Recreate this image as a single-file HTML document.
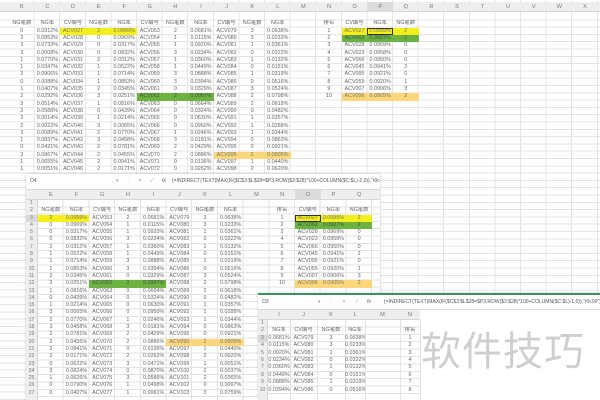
<!DOCTYPE html>
<html><head><meta charset="utf-8"><style>
*{margin:0;padding:0;box-sizing:border-box}
body{width:600px;height:400px;overflow:hidden;background:#fff;position:relative;font-family:"Liberation Sans","Noto Sans CJK SC",sans-serif;color:#666;font-size:5.4px}
.l{position:absolute;overflow:hidden;background:#fff}
table{position:absolute;border-collapse:collapse;table-layout:fixed}
td{padding:0;text-align:center;white-space:nowrap;overflow:hidden;height:7.3px;line-height:7.3px}
.y{background:#f4ee1c;color:#776}.g{background:#6cb240;color:#454}.o{background:#fbd67a;color:#776}
.ch{position:absolute;background:#eeeeee;border-bottom:1px solid #d8d8d8;color:#777;font-size:5.6px}
.ch span{position:absolute;text-align:center;top:0}
.fb{position:absolute;background:#fff;border-bottom:1px solid #d8d8d8;color:#555;font-size:5px;white-space:nowrap}
.rn{position:absolute;background:#eeeeee;border-right:1px solid #d4d4d4;color:#777;font-size:5.2px}
.rn div{height:7.3px;line-height:7.3px;text-align:center}
</style></head><body>

<!-- Layer 1 -->
<div class="l" style="left:0;top:0;width:600px;height:400px;background:
repeating-linear-gradient(90deg,transparent 0 24.6px,#e4e4e4 24.6px 25.6px) 9px 0/100% 100%,
repeating-linear-gradient(180deg,transparent 0 6.3px,#e4e4e4 6.3px 7.3px) 0 13px/100% 100%;">
<div class="ch" style="left:0;top:2px;width:600px;height:10px;line-height:10px">
<span style="left:9px;width:25.6px">B</span><span style="left:34.6px;width:25.6px">C</span><span style="left:60.2px;width:25.6px">D</span><span style="left:85.8px;width:25.6px">E</span><span style="left:111.4px;width:25.6px">F</span><span style="left:137px;width:25.6px">G</span><span style="left:162.6px;width:25.6px">H</span><span style="left:188.2px;width:25.6px">I</span><span style="left:213.8px;width:25.6px">J</span><span style="left:239.4px;width:25.6px">K</span><span style="left:265px;width:25.6px">L</span><span style="left:290.6px;width:25.6px">M</span><span style="left:316.2px;width:25.6px">N</span><span style="left:341.8px;width:25.6px">O</span><span style="left:367.4px;width:25.6px;background:#dcdcdc">P</span><span style="left:393px;width:25.6px">Q</span><span style="left:418.6px;width:25.6px">R</span><span style="left:444.2px;width:25.6px">S</span><span style="left:469.8px;width:25.6px">T</span><span style="left:495.4px;width:25.6px">U</span><span style="left:521px;width:25.6px">V</span><span style="left:546.6px;width:25.6px">W</span><span style="left:572.2px;width:25.6px">X</span>
</div>
<table style="left:9px;top:20.4px;width:409.6px">
<colgroup><col span="16" style="width:25.6px"></colgroup>
<tr><td>NG笔数</td><td>NG率</td><td>CV编号</td><td>NG笔数</td><td>NG率</td><td>CV编号</td><td>NG笔数</td><td>NG率</td><td>CV编号</td><td>NG笔数</td><td>NG率</td><td></td><td>排名</td><td>CV编号</td><td>NG率</td><td>NG笔数</td></tr>
<tr><td>0</td><td>0.0312%</td><td class="y">ACV027</td><td class="y">2</td><td class="y">0.0999%</td><td>ACV053</td><td>2</td><td>0.0681%</td><td>ACV079</td><td>3</td><td>0.0638%</td><td></td><td>1</td><td class="y">ACV027</td><td class="y" style="outline:1px solid #333;outline-offset:-1px">0.0999%</td><td class="y">2</td></tr>
<tr><td>3</td><td>0.0853%</td><td>ACV028</td><td>0</td><td>0.0969%</td><td>ACV054</td><td>1</td><td>0.0115%</td><td>ACV080</td><td>3</td><td>0.0233%</td><td></td><td>2</td><td class="g">ACV062</td><td class="g">0.0987%</td><td class="g">2</td></tr>
<tr><td>3</td><td>0.0733%</td><td>ACV029</td><td>0</td><td>0.0317%</td><td>ACV055</td><td>1</td><td>0.0920%</td><td>ACV081</td><td>1</td><td>0.0361%</td><td></td><td>3</td><td>ACV028</td><td>0.0969%</td><td>0</td></tr>
<tr><td>3</td><td>0.0008%</td><td>ACV030</td><td>0</td><td>0.0832%</td><td>ACV056</td><td>3</td><td>0.0234%</td><td>ACV082</td><td>0</td><td>0.0322%</td><td></td><td>4</td><td>ACV023</td><td>0.0958%</td><td>0</td></tr>
<tr><td>1</td><td>0.0770%</td><td>ACV031</td><td>2</td><td>0.0312%</td><td>ACV057</td><td>1</td><td>0.0360%</td><td>ACV083</td><td>1</td><td>0.0132%</td><td></td><td>5</td><td>ACV066</td><td>0.0950%</td><td>0</td></tr>
<tr><td>1</td><td>0.0347%</td><td>ACV032</td><td>1</td><td>0.0522%</td><td>ACV058</td><td>1</td><td>0.0449%</td><td>ACV084</td><td>0</td><td>0.0151%</td><td></td><td>6</td><td>ACV045</td><td>0.0941%</td><td>2</td></tr>
<tr><td>3</td><td>0.0906%</td><td>ACV033</td><td>1</td><td>0.0714%</td><td>ACV059</td><td>3</td><td>0.0888%</td><td>ACV085</td><td>1</td><td>0.0319%</td><td></td><td>7</td><td>ACV095</td><td>0.0921%</td><td>0</td></tr>
<tr><td>0</td><td>0.0088%</td><td>ACV034</td><td>1</td><td>0.0853%</td><td>ACV060</td><td>3</td><td>0.0394%</td><td>ACV086</td><td>0</td><td>0.0516%</td><td></td><td>8</td><td>ACV055</td><td>0.0920%</td><td>1</td></tr>
<tr><td>1</td><td>0.0407%</td><td>ACV035</td><td>2</td><td>0.0345%</td><td>ACV061</td><td>0</td><td>0.0329%</td><td>ACV087</td><td>3</td><td>0.0524%</td><td></td><td>9</td><td>ACV007</td><td>0.0906%</td><td>3</td></tr>
<tr><td>2</td><td>0.0292%</td><td>ACV036</td><td>3</td><td>0.0251%</td><td class="g">ACV062</td><td class="g">2</td><td class="g">0.0987%</td><td>ACV088</td><td>2</td><td>0.0798%</td><td></td><td>10</td><td class="o">ACV096</td><td class="o">0.0905%</td><td class="o">2</td></tr>
<tr><td>3</td><td>0.0514%</td><td>ACV037</td><td>1</td><td>0.0816%</td><td>ACV063</td><td>0</td><td>0.0664%</td><td>ACV089</td><td>2</td><td>0.0618%</td><td></td><td></td><td></td><td></td><td></td></tr>
<tr><td>3</td><td>0.0588%</td><td>ACV038</td><td>0</td><td>0.0439%</td><td>ACV064</td><td>0</td><td>0.0324%</td><td>ACV090</td><td>0</td><td>0.0482%</td><td></td><td></td><td></td><td></td><td></td></tr>
<tr><td>3</td><td>0.0014%</td><td>ACV039</td><td>1</td><td>0.0214%</td><td>ACV065</td><td>0</td><td>0.0630%</td><td>ACV091</td><td>1</td><td>0.0357%</td><td></td><td></td><td></td><td></td><td></td></tr>
<tr><td>2</td><td>0.0022%</td><td>ACV040</td><td>3</td><td>0.0065%</td><td>ACV066</td><td>0</td><td>0.0950%</td><td>ACV092</td><td>1</td><td>0.0288%</td><td></td><td></td><td></td><td></td><td></td></tr>
<tr><td>3</td><td>0.0089%</td><td>ACV041</td><td>2</td><td>0.0770%</td><td>ACV067</td><td>1</td><td>0.0246%</td><td>ACV093</td><td>1</td><td>0.0344%</td><td></td><td></td><td></td><td></td><td></td></tr>
<tr><td>1</td><td>0.0837%</td><td>ACV042</td><td>3</td><td>0.0458%</td><td>ACV068</td><td>3</td><td>0.0181%</td><td>ACV094</td><td>0</td><td>0.0863%</td><td></td><td></td><td></td><td></td><td></td></tr>
<tr><td>0</td><td>0.0421%</td><td>ACV043</td><td>2</td><td>0.0781%</td><td>ACV069</td><td>2</td><td>0.0429%</td><td>ACV095</td><td>0</td><td>0.0921%</td><td></td><td></td><td></td><td></td><td></td></tr>
<tr><td>3</td><td>0.0867%</td><td>ACV044</td><td>2</td><td>0.0455%</td><td>ACV070</td><td>2</td><td>0.0886%</td><td class="o">ACV096</td><td class="o">2</td><td class="o">0.0905%</td><td></td><td></td><td></td><td></td><td></td></tr>
<tr><td>1</td><td>0.0655%</td><td>ACV045</td><td>2</td><td>0.0941%</td><td>ACV071</td><td>0</td><td>0.0136%</td><td>ACV097</td><td>1</td><td>0.0440%</td><td></td><td></td><td></td><td></td><td></td></tr>
<tr><td>1</td><td>0.0051%</td><td>ACV046</td><td>2</td><td>0.0171%</td><td>ACV072</td><td>0</td><td>0.0262%</td><td>ACV098</td><td>2</td><td>0.0620%</td><td></td><td></td><td></td><td></td><td></td></tr>
</table>
</div>

<!-- Layer 2 -->
<div class="l" style="left:26px;top:174px;width:354px;height:226px;box-shadow:0 0 2px rgba(0,0,0,.25);background:#fff
repeating-linear-gradient(90deg,transparent 0 24.7px,#e2e2e2 24.7px 25.7px) 12px 26px/100% 100% no-repeat;">
<div style="position:absolute;left:0;top:26px;width:354px;height:200px;background:repeating-linear-gradient(180deg,transparent 0 6.3px,#e2e2e2 6.3px 7.3px)"></div>
<div class="fb" style="left:0;top:0;width:354px;height:16px;line-height:15px">
<span style="position:absolute;left:4px">O4</span><span style="position:absolute;left:90px;color:#999">▾</span><span style="position:absolute;left:100px;color:#bbb">⋮</span><span style="position:absolute;left:112px;color:#aaa">✕</span><span style="position:absolute;left:124px;color:#aaa">✓</span><span style="position:absolute;left:136px;font-style:italic">fx</span>
<span style="position:absolute;left:146px">{=INDIRECT(TEXT(MAX(IF($C$3:$L$28=$P3,ROW($3:$28)*100+COLUMN($C:$L)-2,0)),"r0c00"),)}</span></div>
<div class="ch" style="left:0;top:16px;width:354px;height:10px;line-height:10px">
<span style="left:12px;width:25.7px">E</span><span style="left:37.7px;width:25.7px">F</span><span style="left:63.4px;width:25.7px">G</span><span style="left:89.1px;width:25.7px">H</span><span style="left:114.8px;width:25.7px">I</span><span style="left:140.5px;width:25.7px">J</span><span style="left:166.2px;width:25.7px">K</span><span style="left:191.9px;width:25.7px">L</span><span style="left:217.6px;width:25.7px">M</span><span style="left:243.3px;width:25.7px">N</span><span style="left:269px;width:25.7px;background:#dcdcdc">O</span><span style="left:294.7px;width:25.7px">P</span><span style="left:320.4px;width:25.7px">Q</span></div>
<div class="rn" style="left:0;top:26px;width:12px;height:200px"><div>1</div><div>2</div><div style="background:#d8d8d8">3</div><div>4</div><div>5</div><div>6</div><div>7</div><div>8</div><div>9</div><div>10</div><div>11</div><div>12</div><div>13</div><div>14</div><div>15</div><div>16</div><div>17</div><div>18</div><div>19</div><div>20</div><div>21</div><div>22</div><div>23</div><div>24</div><div>25</div><div>26</div><div>27</div></div>
<table style="left:12px;top:33.3px;width:334px">
<colgroup><col span="13" style="width:25.7px"></colgroup>
<tr><td>NG笔数</td><td>NG率</td><td>CV编号</td><td>NG笔数</td><td>NG率</td><td>CV编号</td><td>NG笔数</td><td>NG率</td><td></td><td>排名</td><td>CV编号</td><td>NG率</td><td>NG笔数</td></tr>
<tr><td class="y">2</td><td class="y">0.0999%</td><td>ACV053</td><td>2</td><td>0.0681%</td><td>ACV079</td><td>3</td><td>0.0638%</td><td></td><td>1</td><td class="y" style="outline:1px solid #333;outline-offset:-1px">ACV027</td><td class="y">0.0999%</td><td class="y">2</td></tr>
<tr><td>0</td><td>0.0969%</td><td>ACV054</td><td>1</td><td>0.0115%</td><td>ACV080</td><td>3</td><td>0.0233%</td><td></td><td>2</td><td class="g">ACV062</td><td class="g">0.0987%</td><td class="g">2</td></tr>
<tr><td>0</td><td>0.0317%</td><td>ACV055</td><td>1</td><td>0.0920%</td><td>ACV081</td><td>1</td><td>0.0361%</td><td></td><td>3</td><td>ACV028</td><td>0.0969%</td><td>0</td></tr>
<tr><td>0</td><td>0.0832%</td><td>ACV056</td><td>3</td><td>0.0234%</td><td>ACV082</td><td>0</td><td>0.0322%</td><td></td><td>4</td><td>ACV023</td><td>0.0958%</td><td>0</td></tr>
<tr><td>2</td><td>0.0312%</td><td>ACV057</td><td>1</td><td>0.0360%</td><td>ACV083</td><td>1</td><td>0.0132%</td><td></td><td>5</td><td>ACV066</td><td>0.0950%</td><td>0</td></tr>
<tr><td>1</td><td>0.0522%</td><td>ACV058</td><td>1</td><td>0.0449%</td><td>ACV084</td><td>0</td><td>0.0151%</td><td></td><td>6</td><td>ACV045</td><td>0.0941%</td><td>2</td></tr>
<tr><td>1</td><td>0.0714%</td><td>ACV059</td><td>3</td><td>0.0888%</td><td>ACV085</td><td>1</td><td>0.0319%</td><td></td><td>7</td><td>ACV095</td><td>0.0921%</td><td>0</td></tr>
<tr><td>1</td><td>0.0853%</td><td>ACV060</td><td>3</td><td>0.0394%</td><td>ACV086</td><td>0</td><td>0.0516%</td><td></td><td>8</td><td>ACV055</td><td>0.0920%</td><td>1</td></tr>
<tr><td>2</td><td>0.0345%</td><td>ACV061</td><td>0</td><td>0.0329%</td><td>ACV087</td><td>3</td><td>0.0524%</td><td></td><td>9</td><td>ACV007</td><td>0.0906%</td><td>3</td></tr>
<tr><td>3</td><td>0.0251%</td><td class="g">ACV062</td><td class="g">2</td><td class="g">0.0987%</td><td>ACV088</td><td>2</td><td>0.0798%</td><td></td><td>10</td><td class="o">ACV096</td><td class="o">0.0905%</td><td class="o">2</td></tr>
<tr><td>1</td><td>0.0816%</td><td>ACV063</td><td>0</td><td>0.0664%</td><td>ACV089</td><td>2</td><td>0.0618%</td><td></td><td></td><td></td><td></td><td></td></tr>
<tr><td>0</td><td>0.0439%</td><td>ACV064</td><td>0</td><td>0.0324%</td><td>ACV090</td><td>0</td><td>0.0482%</td><td></td><td></td><td></td><td></td><td></td></tr>
<tr><td>1</td><td>0.0214%</td><td>ACV065</td><td>0</td><td>0.0630%</td><td>ACV091</td><td>1</td><td>0.0357%</td><td></td><td></td><td></td><td></td><td></td></tr>
<tr><td>3</td><td>0.0065%</td><td>ACV066</td><td>0</td><td>0.0950%</td><td>ACV092</td><td>1</td><td>0.0288%</td><td></td><td></td><td></td><td></td><td></td></tr>
<tr><td>2</td><td>0.0770%</td><td>ACV067</td><td>1</td><td>0.0246%</td><td>ACV093</td><td>1</td><td>0.0344%</td><td></td><td></td><td></td><td></td><td></td></tr>
<tr><td>3</td><td>0.0458%</td><td>ACV068</td><td>3</td><td>0.0181%</td><td>ACV094</td><td>0</td><td>0.0863%</td><td></td><td></td><td></td><td></td><td></td></tr>
<tr><td>2</td><td>0.0781%</td><td>ACV069</td><td>2</td><td>0.0429%</td><td>ACV095</td><td>0</td><td>0.0921%</td><td></td><td></td><td></td><td></td><td></td></tr>
<tr><td>2</td><td>0.0455%</td><td>ACV070</td><td>2</td><td>0.0886%</td><td class="o">ACV096</td><td class="o">2</td><td class="o">0.0905%</td><td></td><td></td><td></td><td></td><td></td></tr>
<tr><td>2</td><td>0.0941%</td><td>ACV071</td><td>0</td><td>0.0136%</td><td>ACV097</td><td>1</td><td>0.0440%</td><td></td><td></td><td></td><td></td><td></td></tr>
<tr><td>2</td><td>0.0171%</td><td>ACV072</td><td>2</td><td>0.0262%</td><td>ACV098</td><td>2</td><td>0.0620%</td><td></td><td></td><td></td><td></td><td></td></tr>
<tr><td>0</td><td>0.0622%</td><td>ACV073</td><td>3</td><td>0.0471%</td><td>ACV099</td><td>1</td><td>0.0051%</td><td></td><td></td><td></td><td></td><td></td></tr>
<tr><td>3</td><td>0.0824%</td><td>ACV074</td><td>0</td><td>0.0870%</td><td>ACV100</td><td>2</td><td>0.0037%</td><td></td><td></td><td></td><td></td><td></td></tr>
<tr><td>1</td><td>0.0626%</td><td>ACV075</td><td>3</td><td>0.0586%</td><td>ACV101</td><td>2</td><td>0.0365%</td><td></td><td></td><td></td><td></td><td></td></tr>
<tr><td>0</td><td>0.0790%</td><td>ACV076</td><td>1</td><td>0.0498%</td><td>ACV102</td><td>0</td><td>0.0097%</td><td></td><td></td><td></td><td></td><td></td></tr>
<tr><td>0</td><td>0.0407%</td><td>ACV077</td><td>1</td><td>0.0061%</td><td>ACV103</td><td>3</td><td>0.0759%</td><td></td><td></td><td></td><td></td><td></td></tr>
</table>
</div>

<!-- Layer 3 -->
<div class="l" style="left:258px;top:293px;width:342px;height:107px;border-top:2px solid #3f8f5c;box-shadow:0 0 2px rgba(0,0,0,.2)">
<div style="position:absolute;left:0;top:25px;width:162px;height:82px;background:
repeating-linear-gradient(180deg,transparent 0 6.4px,#e2e2e2 6.4px 7.4px)"></div>
<div style="position:absolute;left:32px;top:25px;width:1px;height:82px;background:#e2e2e2"></div>
<div style="position:absolute;left:59px;top:25px;width:1px;height:82px;background:#e2e2e2"></div>
<div style="position:absolute;left:87px;top:25px;width:1px;height:82px;background:#e2e2e2"></div>
<div style="position:absolute;left:107px;top:25px;width:1px;height:82px;background:#e2e2e2"></div>
<div style="position:absolute;left:142px;top:25px;width:1px;height:82px;background:#e2e2e2"></div>
<div style="position:absolute;left:162px;top:25px;width:1px;height:82px;background:#e2e2e2"></div>
<div class="fb" style="left:0;top:1px;width:342px;height:14px;line-height:13px">
<span style="position:absolute;left:4px">O3</span><span style="position:absolute;left:60px;color:#999">▾</span><span style="position:absolute;left:70px;color:#bbb">⋮</span><span style="position:absolute;left:84px;color:#aaa">✕</span><span style="position:absolute;left:97px;color:#aaa">✓</span><span style="position:absolute;left:109px;font-style:italic">fx</span>
<span style="position:absolute;left:126px">{=INDIRECT(TEXT(MAX(IF($C$3:$L$28=$P3,ROW($3:$28)*100+COLUMN($C:$L)-1,0)),"r0c00"),)}</span></div>
<div class="ch" style="left:0;top:15px;width:162px;height:10px;line-height:10px">
<span style="left:10px;width:22px">I</span><span style="left:32px;width:27px">J</span><span style="left:59px;width:28px">K</span><span style="left:87px;width:20px">L</span><span style="left:107px;width:35px">M</span><span style="left:142px;width:20px">N</span></div>
<div class="rn" style="left:0;top:25px;width:10px;height:82px"><div style="height:7.4px">1</div><div style="height:7.4px">2</div><div style="height:7.4px;background:#d8d8d8">3</div><div style="height:7.4px">4</div><div style="height:7.4px">5</div><div style="height:7.4px">6</div><div style="height:7.4px">7</div><div style="height:7.4px">8</div><div style="height:7.4px">9</div><div style="height:7.4px">10</div></div>
<table style="left:10px;top:32.4px;width:152px">
<colgroup><col style="width:22px"><col style="width:27px"><col style="width:28px"><col style="width:20px"><col style="width:35px"><col style="width:20px"></colgroup>
<tr><td style="height:7.4px">NG率</td><td>CV编号</td><td>NG笔数</td><td>NG率</td><td></td><td>排名</td></tr>
<tr><td style="height:7.4px">0.0681%</td><td>ACV079</td><td>3</td><td>0.0638%</td><td></td><td>1</td></tr>
<tr><td style="height:7.4px">0.0115%</td><td>ACV080</td><td>3</td><td>0.0233%</td><td></td><td>2</td></tr>
<tr><td style="height:7.4px">0.0920%</td><td>ACV081</td><td>1</td><td>0.0361%</td><td></td><td>3</td></tr>
<tr><td style="height:7.4px">0.0234%</td><td>ACV082</td><td>0</td><td>0.0322%</td><td></td><td>4</td></tr>
<tr><td style="height:7.4px">0.0360%</td><td>ACV083</td><td>1</td><td>0.0132%</td><td></td><td>5</td></tr>
<tr><td style="height:7.4px">0.0449%</td><td>ACV084</td><td>0</td><td>0.0151%</td><td></td><td>6</td></tr>
<tr><td style="height:7.4px">0.0888%</td><td>ACV085</td><td>1</td><td>0.0319%</td><td></td><td>7</td></tr>
<tr><td style="height:7.4px">0.0394%</td><td>ACV086</td><td>0</td><td>0.0516%</td><td></td><td>8</td></tr>
</table>
<div style="position:absolute;left:163px;top:30px;font-family:'Noto Sans CJK SC',sans-serif;font-size:40px;color:#cfcfcf;letter-spacing:1px;line-height:46px">软件技巧</div>
</div>
</body></html>
